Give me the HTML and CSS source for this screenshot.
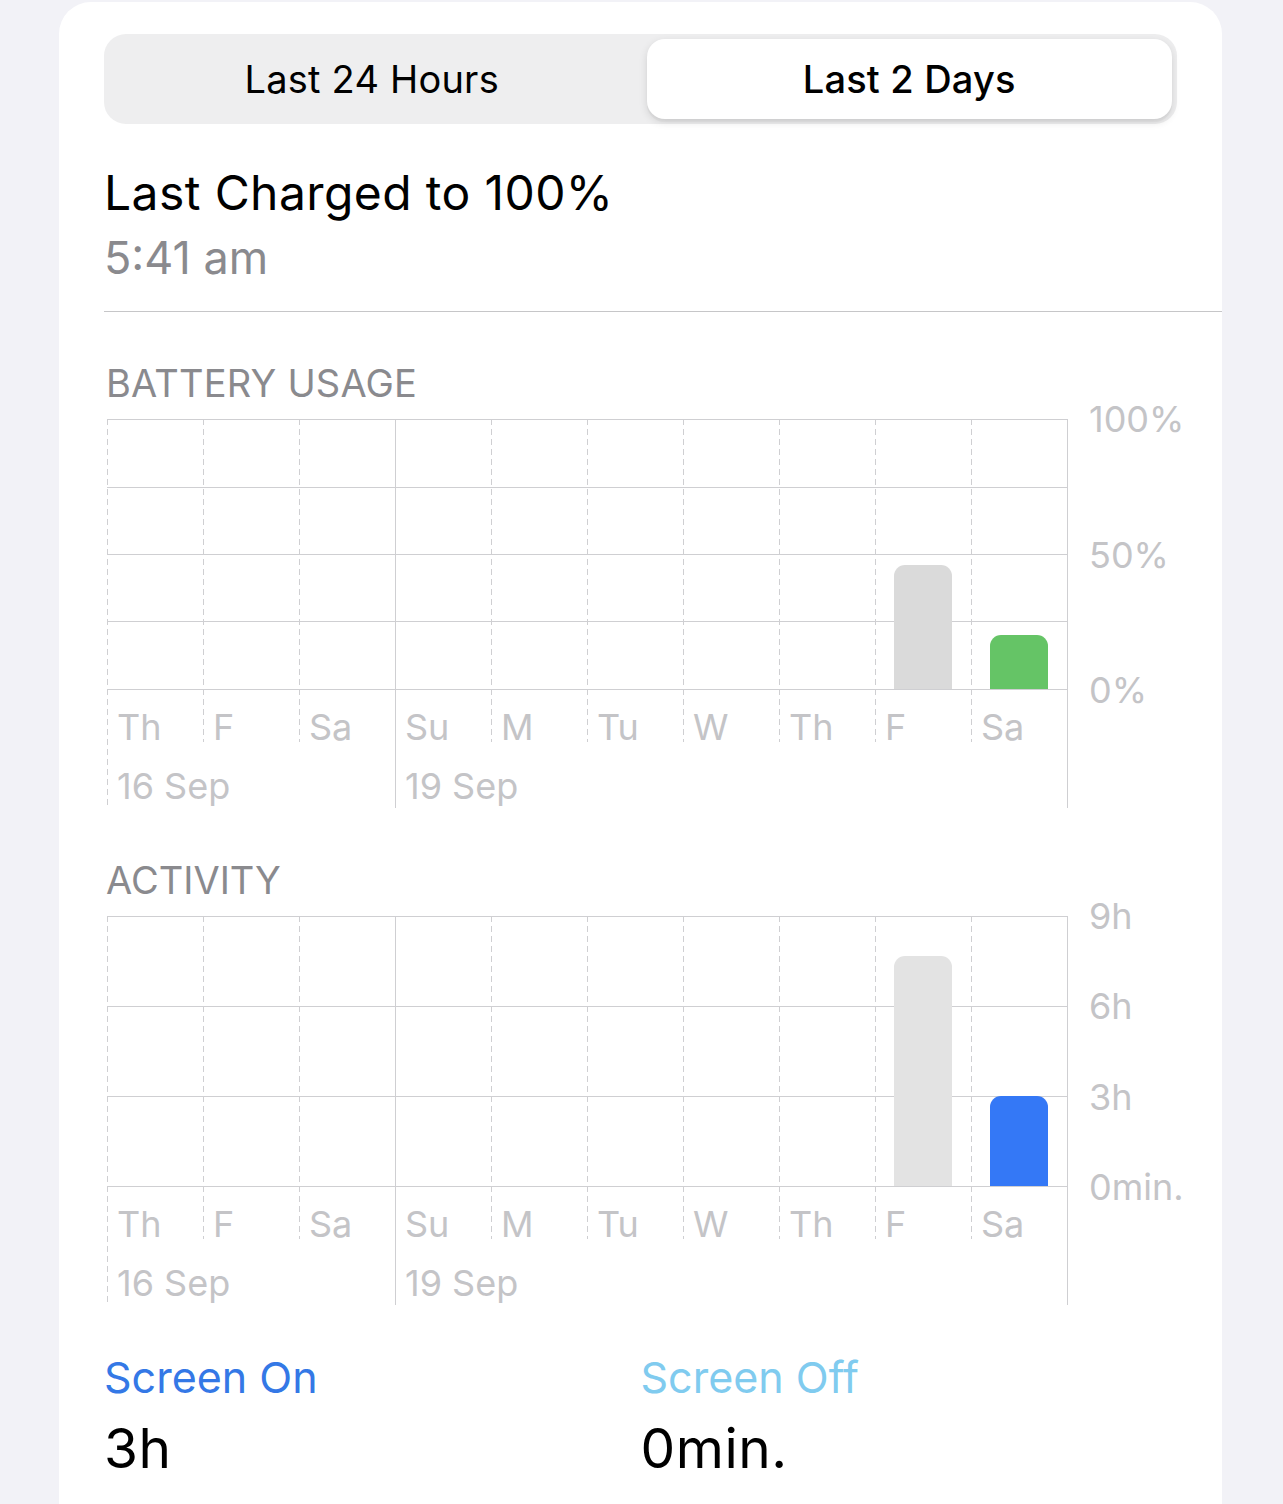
FILE: index.html
```html
<!DOCTYPE html>
<html lang="en">

<head>
    <meta charset="UTF-8">
    <meta name="viewport" content="width=device-width, initial-scale=1.0">
    <title>Battery</title>
    <link rel="stylesheet" href="styles.css">
</head>

<body>
    <div class="card">
        <div class="segmented">
            <div class="segment">Last 24 Hours</div>
            <div class="segment active">Last 2 Days</div>
        </div>

        <div class="charged">
            <div class="charged-title">Last Charged to 100%</div>
            <div class="charged-time">5:41 am</div>
        </div>

        <div class="divider"></div>

        <!-- Battery usage chart -->
        <div class="section-title">BATTERY USAGE</div>
        <div class="chart">
            <div class="days battery">
                <div class="day first">
                    <div class="bar-slot"></div>
                    <div class="day-name">Th</div>
                    <div class="day-date">16 Sep</div>
                </div>
                <div class="day">
                    <div class="bar-slot"></div>
                    <div class="day-name">F</div>
                    <div class="day-date"></div>
                </div>
                <div class="day">
                    <div class="bar-slot"></div>
                    <div class="day-name">Sa</div>
                    <div class="day-date"></div>
                </div>
                <div class="day week">
                    <div class="bar-slot"></div>
                    <div class="day-name">Su</div>
                    <div class="day-date">19 Sep</div>
                </div>
                <div class="day">
                    <div class="bar-slot"></div>
                    <div class="day-name">M</div>
                    <div class="day-date"></div>
                </div>
                <div class="day">
                    <div class="bar-slot"></div>
                    <div class="day-name">Tu</div>
                    <div class="day-date"></div>
                </div>
                <div class="day">
                    <div class="bar-slot"></div>
                    <div class="day-name">W</div>
                    <div class="day-date"></div>
                </div>
                <div class="day">
                    <div class="bar-slot"></div>
                    <div class="day-name">Th</div>
                    <div class="day-date"></div>
                </div>
                <div class="day">
                    <div class="bar-slot">
                        <div class="bar bar-gray" style="height: 124px"></div>
                    </div>
                    <div class="day-name">F</div>
                    <div class="day-date"></div>
                </div>
                <div class="day">
                    <div class="bar-slot">
                        <div class="bar bar-green" style="height: 54px"></div>
                    </div>
                    <div class="day-name">Sa</div>
                    <div class="day-date"></div>
                </div>
            </div>
            <div class="y-axis">
                <span>100%</span>
                <span>50%</span>
                <span>0%</span>
            </div>
        </div>

        <!-- Activity chart -->
        <div class="section-title activity-title">ACTIVITY</div>
        <div class="chart">
            <div class="days activity">
                <div class="day first">
                    <div class="bar-slot"></div>
                    <div class="day-name">Th</div>
                    <div class="day-date">16 Sep</div>
                </div>
                <div class="day">
                    <div class="bar-slot"></div>
                    <div class="day-name">F</div>
                    <div class="day-date"></div>
                </div>
                <div class="day">
                    <div class="bar-slot"></div>
                    <div class="day-name">Sa</div>
                    <div class="day-date"></div>
                </div>
                <div class="day week">
                    <div class="bar-slot"></div>
                    <div class="day-name">Su</div>
                    <div class="day-date">19 Sep</div>
                </div>
                <div class="day">
                    <div class="bar-slot"></div>
                    <div class="day-name">M</div>
                    <div class="day-date"></div>
                </div>
                <div class="day">
                    <div class="bar-slot"></div>
                    <div class="day-name">Tu</div>
                    <div class="day-date"></div>
                </div>
                <div class="day">
                    <div class="bar-slot"></div>
                    <div class="day-name">W</div>
                    <div class="day-date"></div>
                </div>
                <div class="day">
                    <div class="bar-slot"></div>
                    <div class="day-name">Th</div>
                    <div class="day-date"></div>
                </div>
                <div class="day">
                    <div class="bar-slot">
                        <div class="bar bar-light" style="height: 230px"></div>
                    </div>
                    <div class="day-name">F</div>
                    <div class="day-date"></div>
                </div>
                <div class="day">
                    <div class="bar-slot">
                        <div class="bar bar-blue" style="height: 90px"></div>
                    </div>
                    <div class="day-name">Sa</div>
                    <div class="day-date"></div>
                </div>
            </div>
            <div class="y-axis">
                <span>9h</span>
                <span>6h</span>
                <span>3h</span>
                <span>0min.</span>
            </div>
        </div>

        <div class="legend">
            <div>
                <div class="legend-label screen-on">Screen On</div>
                <div class="legend-value">3h</div>
            </div>
            <div>
                <div class="legend-label screen-off">Screen Off</div>
                <div class="legend-value">0min.</div>
            </div>
        </div>
    </div>
</body>

</html>
```

FILE: styles.css
```css
* {
    box-sizing: border-box;
}

body {
    margin: 0;
    background-color: #f2f2f7;
    font-family: Inter, "Noto Sans", sans-serif;
    color: #000;
    overflow: hidden;
}

.card {
    margin: 2px 0 0 59px;
    width: 1163px;
    min-height: 1502px;
    background-color: #fff;
    border-radius: 32px 32px 0 0;
    padding: 32px 0 0 45px;
}

/* Segmented control */
.segmented {
    display: grid;
    grid-template-columns: 1fr 1fr;
    gap: 12px;
    width: 1073px;
    height: 90px;
    padding: 5px;
    background-color: #eeeeef;
    border-radius: 22px;
}

.segment {
    height: 80px;
    line-height: 80px;
    text-align: center;
    font-size: 38px;
    font-weight: 400;
    letter-spacing: 0.2px;
}

.segment.active {
    background-color: #fff;
    border-radius: 18px;
    font-weight: 500;
    box-shadow: 0 3px 1px rgba(0, 0, 0, 0.04), 0 3px 8px rgba(0, 0, 0, 0.12);
}

/* Last charged */
.charged {
    margin-top: 39px;
}

.charged-title {
    font-size: 48px;
    line-height: 60px;
    letter-spacing: 0.4px;
}

.charged-time {
    margin-top: 7px;
    font-size: 45px;
    line-height: 56px;
    color: #8a8a8e;
}

.divider {
    margin-top: 25px;
    height: 1px;
    background-color: #c6c6c8;
}

/* Charts */
.section-title {
    margin-top: 47px;
    padding-left: 2px;
    font-size: 38px;
    line-height: 48px;
    color: #8a8a8e;
    letter-spacing: 0.2px;
}

.activity-title {
    margin-top: 48px;
    letter-spacing: 0;
}

.chart {
    display: flex;
    margin: 12px 0 0 3px;
}

.days {
    display: flex;
    border-right: 1px solid #cfcfd2;
}

.days.battery {
    background: repeating-linear-gradient(to bottom, #cfcfd2 0 1px, transparent 1px 67.5px) 0 0 / 100% 271px no-repeat;
}

.days.activity {
    background: repeating-linear-gradient(to bottom, #cfcfd2 0 1px, transparent 1px 90px) 0 0 / 100% 271px no-repeat;
}

.day {
    width: 96px;
    background: repeating-linear-gradient(to bottom, #cfcfd2 0 6px, transparent 6px 10px) 0 0 / 1px 323px no-repeat;
}

.day.first {
    background-size: 1px 100%;
}

.day.week {
    background: linear-gradient(#cfcfd2, #cfcfd2) 0 0 / 1px 100% no-repeat;
}

.bar-slot {
    height: 271px;
    display: flex;
    align-items: flex-end;
    justify-content: center;
    padding-bottom: 1px;
}

.bar {
    width: 58px;
    border-radius: 11px 11px 0 0;
}

.bar-gray {
    background-color: #dadada;
}

.bar-green {
    background-color: #65c466;
}

.bar-light {
    background-color: #e3e3e3;
}

.bar-blue {
    background-color: #3478f6;
}

.day-name {
    height: 57px;
    padding: 17px 0 0 10px;
    font-size: 36px;
    line-height: 40px;
    color: #c4c4c7;
}

.day-date {
    height: 61px;
    padding: 19px 0 0 10px;
    font-size: 36px;
    line-height: 40px;
    color: #c4c4c7;
    white-space: nowrap;
}

.y-axis {
    display: flex;
    flex-direction: column;
    justify-content: space-between;
    align-self: flex-start;
    height: 311px;
    margin: -20px 0 0 21px;
    font-size: 36px;
    line-height: 40px;
    color: #c4c4c7;
}

/* Legend */
.legend {
    display: grid;
    grid-template-columns: 1fr 1fr;
    width: 1073px;
    margin-top: 46px;
}

.legend-label {
    font-size: 43px;
    line-height: 52px;
}

.screen-on {
    color: #3478e6;
}

.screen-off {
    color: #80cbef;
}

.legend-value {
    margin-top: 13px;
    font-size: 55px;
    line-height: 64px;
    letter-spacing: 0.5px;
}
```
